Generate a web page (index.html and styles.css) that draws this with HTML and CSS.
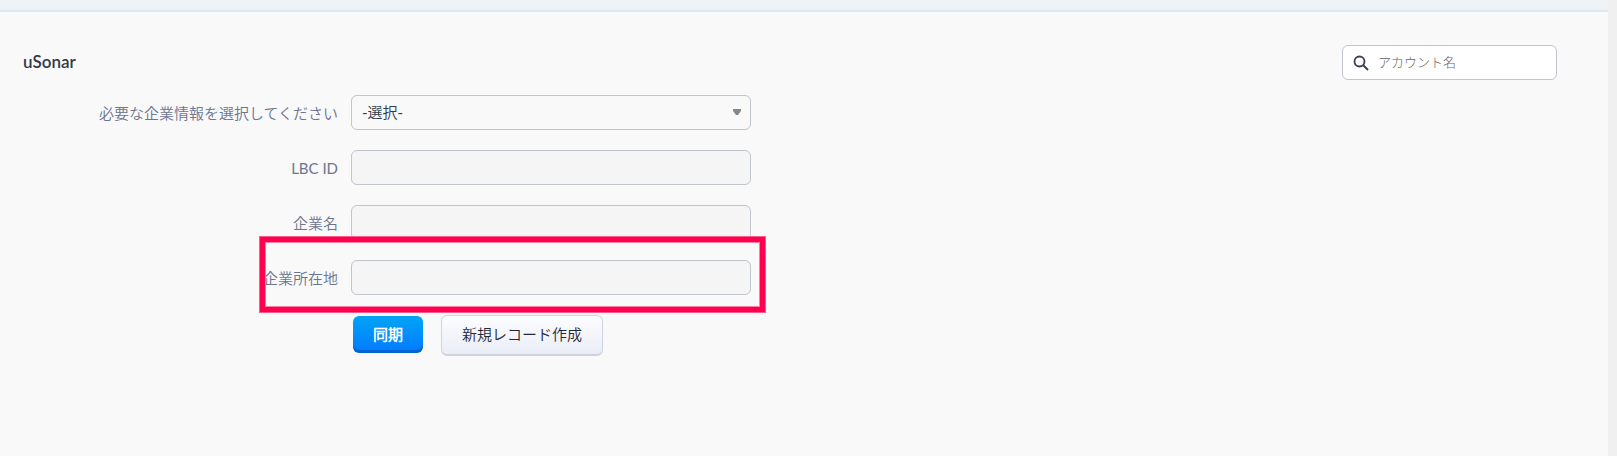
FILE: index.html
```html
<!DOCTYPE html>
<html lang="ja">
<head>
  <meta charset="UTF-8">
  <title>uSonar</title>
  <link rel="stylesheet" href="styles.css">
</head>
<body>
  <div class="page">
    <div class="topbar"></div>

    <header class="header">
      <h1>uSonar</h1>
      <div class="search">
        <svg class="search-icon" viewBox="0 0 16 16" aria-hidden="true">
          <circle cx="6.5" cy="6.5" r="5" fill="none" stroke="#3a4055" stroke-width="1.8"/>
          <path d="M10 10 L15 15" stroke="#3a4055" stroke-width="2"/>
        </svg>
        <input id="accountName" type="text" placeholder="アカウント名" aria-label="アカウント名">
      </div>
    </header>

    <form class="form">
      <div class="row">
        <label for="companyInfo">必要な企業情報を選択してください</label>
        <div class="select-box">
          <select id="companyInfo" class="field">
            <option>-選択-</option>
          </select>
          <svg class="arrow" viewBox="0 0 8 6" aria-hidden="true">
            <path d="M0 0 H8 V2 L5 6 H3 L0 2 Z" fill="#848891"/>
          </svg>
        </div>
      </div>
      <div class="row">
        <label for="lbcId">LBC ID</label>
        <input id="lbcId" class="field" type="text" readonly>
      </div>
      <div class="row">
        <label for="companyName">企業名</label>
        <input id="companyName" class="field" type="text" readonly>
      </div>
      <div class="row">
        <label for="companyAddress">企業所在地</label>
        <input id="companyAddress" class="field" type="text" readonly>
        <div class="highlight"></div>
      </div>
      <div class="buttons">
        <button type="button" class="btn-primary">同期</button>
        <button type="button" class="btn-secondary">新規レコード作成</button>
      </div>
    </form>
  </div>
  <div class="gutter"></div>
</body>
</html>
```
FILE: styles.css
```css
* {
  box-sizing: border-box;
}

body {
  display: flex;
  min-height: 100vh;
  margin: 0;
  background-color: #f9f9f9;
  color: #313949;
  font-family: Lato, 'Noto Sans CJK JP DemiLight', 'Noto Sans CJK JP', sans-serif;
  font-size: 15px;
}

.page {
  flex: 1;
}

.gutter {
  width: 9px;
  background-color: #f0f0f0;
}

.topbar {
  height: 12px;
  background-color: #eff3f6;
  border-bottom: 2px solid #dce8f2;
}

.header {
  display: flex;
  justify-content: space-between;
  align-items: center;
  padding: 33px 51px 15px 23px;
}

h1 {
  margin: 0;
  padding-bottom: 2px;
  font-size: 17px;
  font-weight: 600;
}

.search {
  display: flex;
  align-items: center;
  gap: 9px;
  width: 215px;
  height: 35px;
  padding: 0 10px;
  background-color: #fff;
  border: 1px solid #c0c4cb;
  border-radius: 6px;
}

.search-icon {
  flex: none;
  width: 16px;
  height: 16px;
}

.search input {
  flex: 1;
  min-width: 0;
  padding: 0 0 2px;
  border: none;
  outline: none;
  font-family: Lato, 'Noto Sans CJK JP Light', 'Noto Sans CJK JP', sans-serif;
  font-size: 13px;
}

.search input::placeholder {
  color: #666;
}

.form {
  display: flex;
  flex-direction: column;
  gap: 20px;
  padding-left: 23px;
}

.row {
  position: relative;
  display: grid;
  grid-template-columns: 315px 400px;
  column-gap: 13px;
  align-items: center;
}

label {
  color: #6b7590;
  text-align: right;
}

.field {
  display: block;
  width: 100%;
  height: 35px;
  padding: 0 10px;
  background-color: #f5f5f5;
  border: 1px solid #c0c4cb;
  border-radius: 6px;
  color: #313949;
  font-family: inherit;
  font-size: 15px;
}

.select-box {
  position: relative;
}

select.field {
  appearance: none;
  padding-bottom: 2px;
  background-color: #f9f9f9;
}

.arrow {
  position: absolute;
  top: 14px;
  right: 10px;
  width: 8px;
  height: 6px;
  pointer-events: none;
}

.highlight {
  position: absolute;
  top: -24px;
  left: 236px;
  width: 507px;
  height: 77px;
  border: 6px solid #ff004f;
  outline: 1px solid #ff5c8d;
  outline-offset: -1px;
  box-shadow: inset 0 0 0 1px #ff80a7;
  pointer-events: none;
}

.buttons {
  display: flex;
  align-items: flex-start;
  gap: 18px;
  padding-left: 330px;
}

button {
  border-radius: 6px;
  font-family: inherit;
  font-size: 15px;
  cursor: pointer;
}

.btn-primary {
  height: 37px;
  margin-top: 1px;
  padding: 0 20px 2px;
  background-image: linear-gradient(#02a4f5, #0279ff);
  border: none;
  box-shadow: inset 0 -3px 0 #0264d2;
  color: #fff;
  font-weight: 600;
}

.btn-secondary {
  height: 41px;
  padding: 0 20px 3px;
  background-image: linear-gradient(#fdfdff, #e9edf6);
  border: 1px solid #ced3e0;
  border-bottom-width: 2px;
  color: #222838;
}
```
